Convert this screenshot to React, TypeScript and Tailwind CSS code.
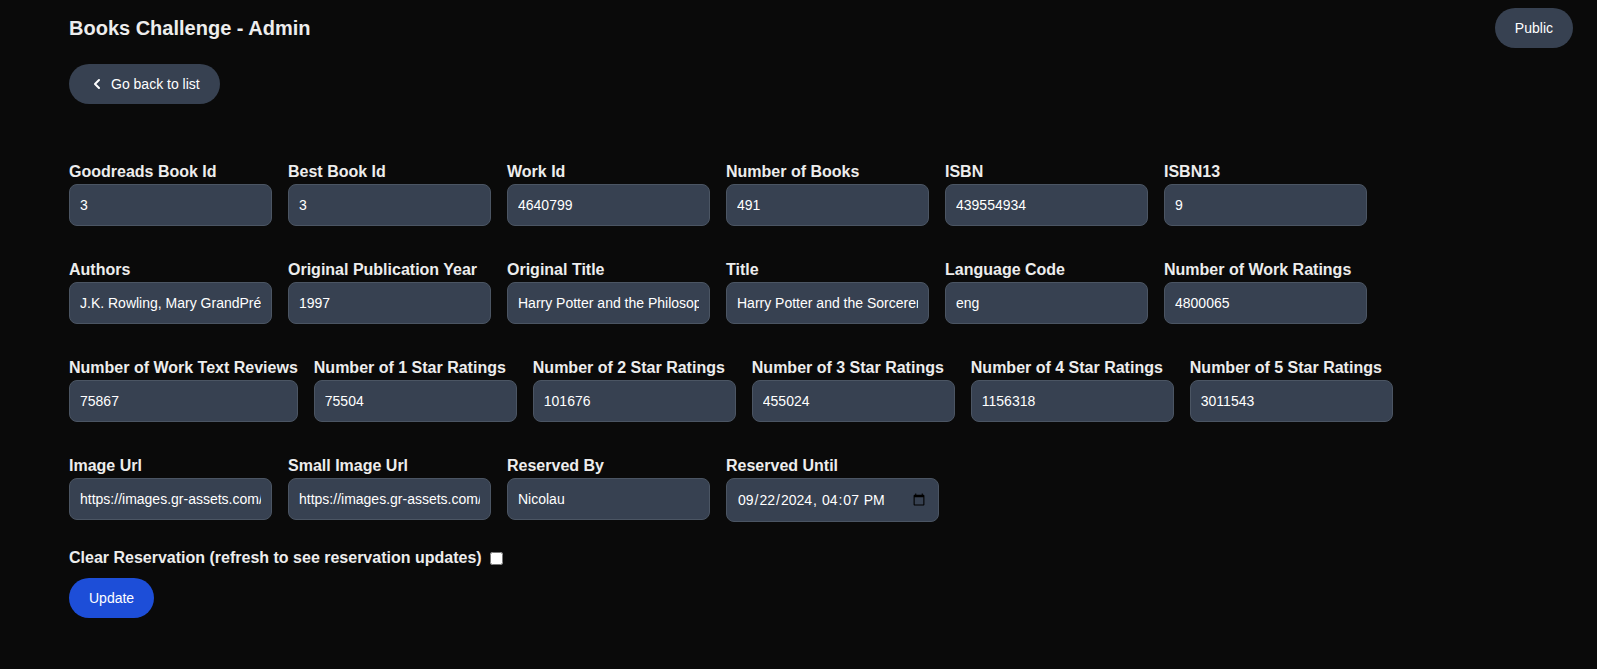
import { ChevronLeft } from "lucide-react";

type Field = {
  label: string;
  value: string;
  type?: string;
};

const rows: Field[][] = [
  [
    { label: "Goodreads Book Id", value: "3" },
    { label: "Best Book Id", value: "3" },
    { label: "Work Id", value: "4640799" },
    { label: "Number of Books", value: "491" },
    { label: "ISBN", value: "439554934" },
    { label: "ISBN13", value: "9" },
  ],
  [
    { label: "Authors", value: "J.K. Rowling, Mary GrandPré" },
    { label: "Original Publication Year", value: "1997" },
    {
      label: "Original Title",
      value: "Harry Potter and the Philosopher's Stone",
    },
    {
      label: "Title",
      value: "Harry Potter and the Sorcerer's Stone (Harry Potter, #1)",
    },
    { label: "Language Code", value: "eng" },
    { label: "Number of Work Ratings", value: "4800065" },
  ],
  [
    { label: "Number of Work Text Reviews", value: "75867" },
    { label: "Number of 1 Star Ratings", value: "75504" },
    { label: "Number of 2 Star Ratings", value: "101676" },
    { label: "Number of 3 Star Ratings", value: "455024" },
    { label: "Number of 4 Star Ratings", value: "1156318" },
    { label: "Number of 5 Star Ratings", value: "3011543" },
  ],
  [
    {
      label: "Image Url",
      value: "https://images.gr-assets.com/books/1474154022m/3.jpg",
    },
    {
      label: "Small Image Url",
      value: "https://images.gr-assets.com/books/1474154022s/3.jpg",
    },
    { label: "Reserved By", value: "Nicolau" },
    {
      label: "Reserved Until",
      value: "2024-09-22T16:07",
      type: "datetime-local",
    },
  ],
];

function FormField({ field }: { field: Field }) {
  const isDate = field.type === "datetime-local";
  return (
    <div className={isDate ? "flex flex-col" : "flex min-w-[203px] flex-col"}>
      <label className="text-base leading-6 font-bold text-[#ededed]">
        {field.label}
      </label>
      <input
        type={field.type ?? "text"}
        defaultValue={field.value}
        className={
          isDate
            ? "h-11 w-[213px] rounded-lg border border-[#4b5563] bg-[#374151] px-2.5 text-sm leading-5 text-white"
            : "w-full rounded-lg border border-[#4b5563] bg-[#374151] px-2.5 py-2.5 text-sm leading-5 text-white"
        }
      />
    </div>
  );
}

export default function App() {
  return (
    <div className="min-h-[669px] bg-[#0a0a0a] font-['Liberation_Sans',Arial,sans-serif] text-[#ededed]">
      <header className="flex items-center justify-between pt-2 pr-6 pl-[69px]">
        <h1 className="text-xl leading-7 font-bold">Books Challenge - Admin</h1>
        <button className="h-10 rounded-full bg-[#374151] px-5 text-sm text-white">
          Public
        </button>
      </header>

      <main className="pl-[69px]">
        <button className="mt-4 flex h-10 items-center gap-1.5 rounded-full bg-[#374151] px-5 text-sm text-white">
          <ChevronLeft className="size-4" strokeWidth={3} aria-hidden="true" />
          Go back to list
        </button>

        <form className="mt-14">
          <div className="flex flex-col gap-8">
            {rows.map((row, i) => (
              <div key={i} className="flex items-start gap-4">
                {row.map((field) => (
                  <FormField key={field.label} field={field} />
                ))}
              </div>
            ))}
          </div>

          <div className="mt-6 flex items-center">
            <label className="text-base leading-6 font-bold">
              Clear Reservation (refresh to see reservation updates)
            </label>
            <input type="checkbox" className="ml-2 size-[13px]" />
          </div>

          <button
            type="button"
            className="mt-2 h-10 rounded-full bg-[#1d4ed8] px-5 text-sm text-white"
          >
            Update
          </button>
        </form>
      </main>
    </div>
  );
}
